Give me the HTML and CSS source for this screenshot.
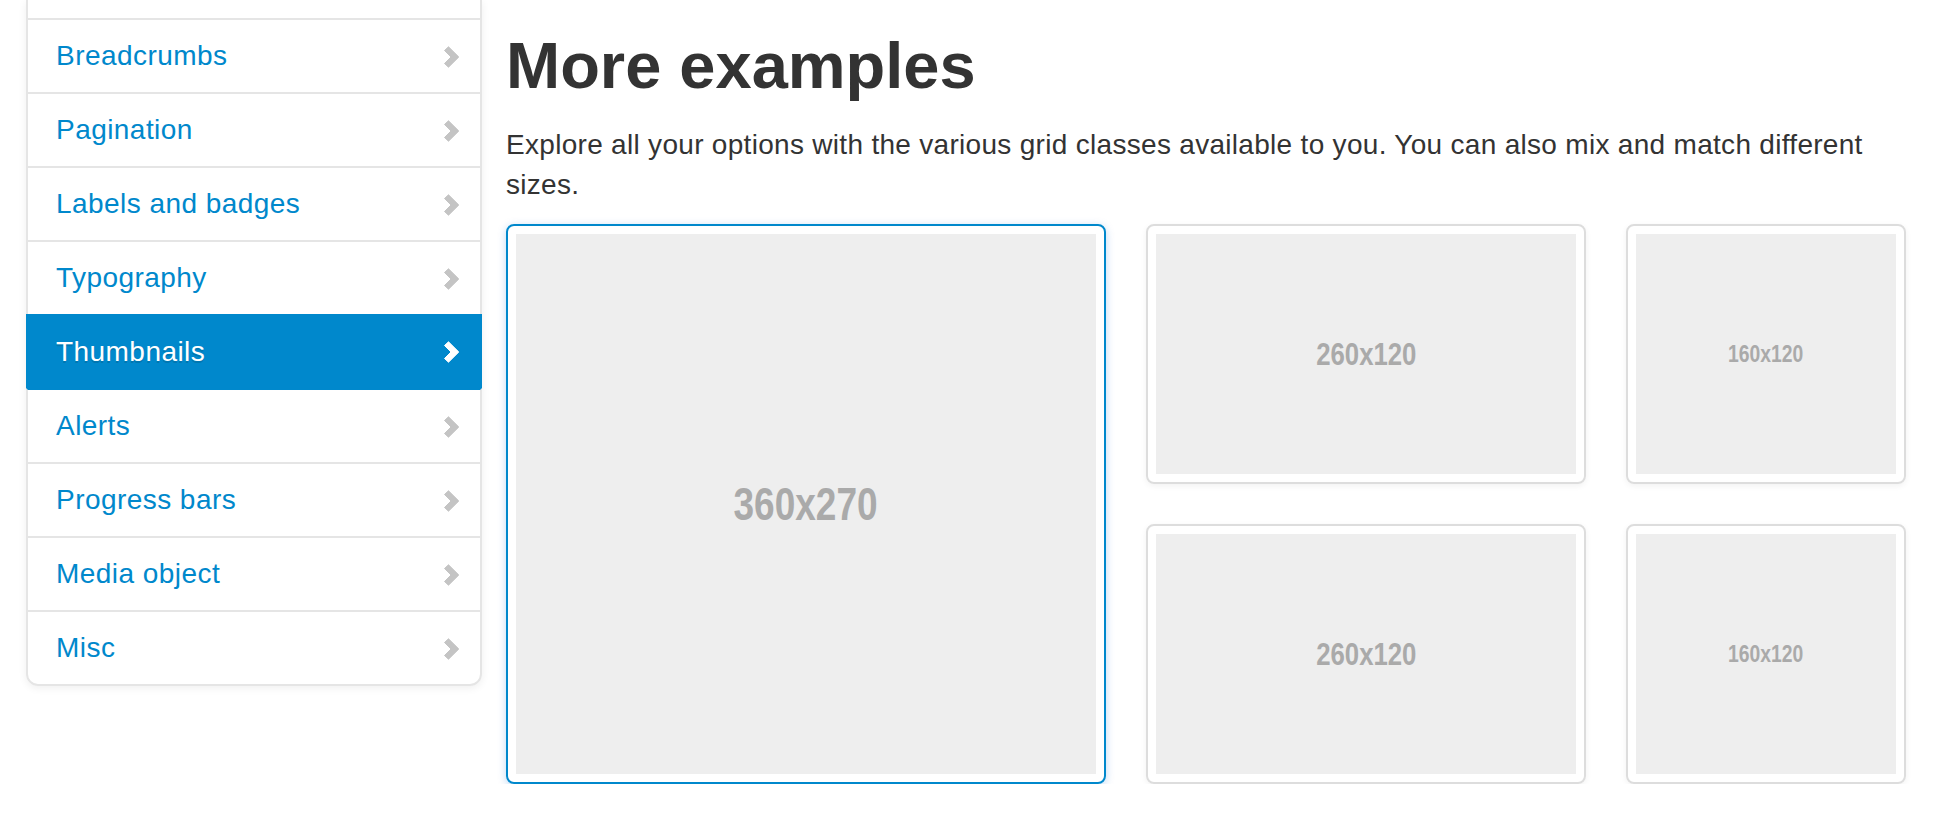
FILE: index.html
```html
<!DOCTYPE html>
<html lang="en">
<head>
<meta charset="utf-8">
<title>Thumbnails</title>
<link rel="stylesheet" href="styles.css">
</head>
<body>
<div class="page">
  <aside class="sidebar">
    <ul class="sidenav">
      <li class="nav-item cut"></li>
      <li class="nav-item"><a href="#">Breadcrumbs</a><svg class="chev" viewBox="0 0 17 22"><polygon points="1.5,4.5 5.5,0.8 15.8,11 5.5,21.2 1.5,17.5 8,11"/></svg></li>
      <li class="nav-item"><a href="#">Pagination</a><svg class="chev" viewBox="0 0 17 22"><polygon points="1.5,4.5 5.5,0.8 15.8,11 5.5,21.2 1.5,17.5 8,11"/></svg></li>
      <li class="nav-item"><a href="#">Labels and badges</a><svg class="chev" viewBox="0 0 17 22"><polygon points="1.5,4.5 5.5,0.8 15.8,11 5.5,21.2 1.5,17.5 8,11"/></svg></li>
      <li class="nav-item"><a href="#">Typography</a><svg class="chev" viewBox="0 0 17 22"><polygon points="1.5,4.5 5.5,0.8 15.8,11 5.5,21.2 1.5,17.5 8,11"/></svg></li>
      <li class="nav-item active"><a href="#">Thumbnails</a><svg class="chev" viewBox="0 0 17 22"><polygon points="1.5,4.5 5.5,0.8 15.8,11 5.5,21.2 1.5,17.5 8,11"/></svg></li>
      <li class="nav-item"><a href="#">Alerts</a><svg class="chev" viewBox="0 0 17 22"><polygon points="1.5,4.5 5.5,0.8 15.8,11 5.5,21.2 1.5,17.5 8,11"/></svg></li>
      <li class="nav-item"><a href="#">Progress bars</a><svg class="chev" viewBox="0 0 17 22"><polygon points="1.5,4.5 5.5,0.8 15.8,11 5.5,21.2 1.5,17.5 8,11"/></svg></li>
      <li class="nav-item"><a href="#">Media object</a><svg class="chev" viewBox="0 0 17 22"><polygon points="1.5,4.5 5.5,0.8 15.8,11 5.5,21.2 1.5,17.5 8,11"/></svg></li>
      <li class="nav-item last"><a href="#">Misc</a><svg class="chev" viewBox="0 0 17 22"><polygon points="1.5,4.5 5.5,0.8 15.8,11 5.5,21.2 1.5,17.5 8,11"/></svg></li>
    </ul>
  </aside>
  <main class="content">
    <h2 class="title">More examples</h2>
    <p class="lead">Explore all your options with the various grid classes available to you. You can also mix and match different sizes.</p>
    <ul class="thumbs">
      <li class="thumb big active"><div class="ph"><span class="ph-text t-lg">360x270</span></div></li>
      <li class="thumb mid"><div class="ph"><span class="ph-text t-md">260x120</span></div></li>
      <li class="thumb small"><div class="ph"><span class="ph-text t-sm">160x120</span></div></li>
      <li class="thumb mid"><div class="ph"><span class="ph-text t-md">260x120</span></div></li>
      <li class="thumb small"><div class="ph"><span class="ph-text t-sm">160x120</span></div></li>
    </ul>
  </main>
</div>
</body>
</html>
```
FILE: styles.css
```css
html, body {
  margin: 0;
  padding: 0;
  background: #fff;
  overflow: hidden;
}
body {
  font-family: "Liberation Sans", Arial, Helvetica, sans-serif;
  color: #333;
}
.page {
  display: flex;
  align-items: flex-start;
  padding-left: 26px;
}
.sidebar {
  width: 456px;
  flex: none;
}
.sidenav {
  list-style: none;
  margin: 0;
  padding: 0;
  background: #fff;
  border-radius: 0 0 12px 12px;
  box-shadow: 0 2px 8px rgba(0, 0, 0, 0.065);
}
.nav-item {
  display: flex;
  align-items: center;
  height: 72px;
  padding: 0 20px 0 28px;
  border: 2px solid #e5e5e5;
  border-bottom: 0;
}
.nav-item.cut {
  height: 18px;
  border-top: 0;
}
.nav-item.last {
  border-bottom: 2px solid #e5e5e5;
  border-radius: 0 0 12px 12px;
}
.nav-item a {
  flex: 1;
  color: #0088cc;
  text-decoration: none;
  font-size: 28px;
  line-height: 40px;
  letter-spacing: 0.45px;
}
.chev {
  width: 17px;
  height: 22px;
  flex: none;
  margin-top: 1px;
  fill: #c4c4c4;
  stroke: #c4c4c4;
  stroke-width: 1;
  stroke-linejoin: round;
}
.nav-item.active {
  background: #0088cc;
  border-color: #0088cc;
}
.nav-item.active + .nav-item {
  border-top-color: #0088cc;
}
.nav-item.active a {
  color: #fff;
  text-shadow: 0 2px 0 rgba(0, 0, 0, 0.15);
}
.nav-item.active .chev {
  fill: #fff;
  stroke: #fff;
  margin-top: 0;
}
.content {
  width: 1400px;
  margin-left: 24px;
  flex: none;
}
.title {
  margin: 26px 0 19px;
  font-size: 65px;
  line-height: 80px;
  font-weight: bold;
  color: #333;
}
.lead {
  margin: 0 0 19px;
  font-size: 28px;
  line-height: 40px;
  letter-spacing: 0.3px;
}
.thumbs {
  list-style: none;
  margin: 0;
  padding: 0;
  display: grid;
  grid-template-columns: 600px 440px 280px;
  grid-template-rows: 260px 260px;
  gap: 40px;
}
.thumb {
  box-sizing: border-box;
  padding: 8px;
  border: 2px solid #ddd;
  border-radius: 8px;
  box-shadow: 0 2px 6px rgba(0, 0, 0, 0.055);
  display: flex;
}
.thumb.big {
  grid-row: 1 / 3;
}
.thumb.active {
  border-color: #0088cc;
  box-shadow: 0 2px 8px rgba(0, 105, 214, 0.25);
}
.ph {
  flex: 1;
  background: #eee;
  display: flex;
  align-items: center;
  justify-content: center;
}
.ph-text {
  font-family: "Liberation Sans", Arial, Helvetica, sans-serif;
  font-weight: bold;
  color: #aaa;
  transform: scaleX(0.805);
  line-height: 1;
}
.t-lg { font-size: 46px; }
.t-md { font-size: 32px; }
.t-sm { font-size: 24px; }
```
